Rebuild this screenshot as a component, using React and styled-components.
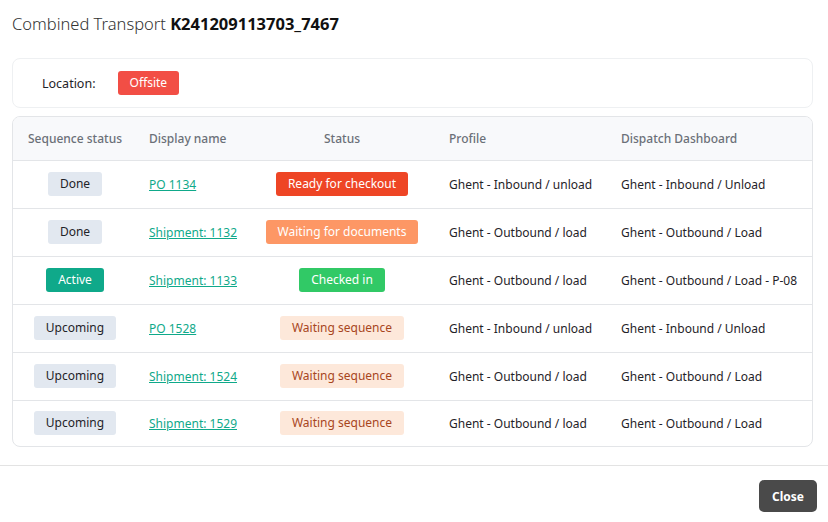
import React from 'react';
import styled, { createGlobalStyle } from 'styled-components';

const GlobalStyle = createGlobalStyle`
  * { box-sizing: border-box; }
  body {
    margin: 0;
    background: #fff;
    font-family: 'Noto Sans', 'Open Sans', sans-serif;
    color: #1f2328;
  }
`;

const rows = [
  { seq: 'done', name: 'PO 1134', status: 'ready', profile: 'Ghent - Inbound / unload', dash: 'Ghent - Inbound / Unload' },
  { seq: 'done', name: 'Shipment: 1132', status: 'docs', profile: 'Ghent - Outbound / load', dash: 'Ghent - Outbound / Load' },
  { seq: 'active', name: 'Shipment: 1133', status: 'checked', profile: 'Ghent - Outbound / load', dash: 'Ghent - Outbound / Load - P-08' },
  { seq: 'upcoming', name: 'PO 1528', status: 'waiting', profile: 'Ghent - Inbound / unload', dash: 'Ghent - Inbound / Unload' },
  { seq: 'upcoming', name: 'Shipment: 1524', status: 'waiting', profile: 'Ghent - Outbound / load', dash: 'Ghent - Outbound / Load' },
  { seq: 'upcoming', name: 'Shipment: 1529', status: 'waiting', profile: 'Ghent - Outbound / load', dash: 'Ghent - Outbound / Load' },
];

const seqLabels = { done: 'Done', active: 'Active', upcoming: 'Upcoming' };
const statusLabels = {
  ready: 'Ready for checkout',
  docs: 'Waiting for documents',
  checked: 'Checked in',
  waiting: 'Waiting sequence',
};

const tones = {
  done: { bg: '#e2e8f0', fg: '#1f2328' },
  upcoming: { bg: '#e2e8f0', fg: '#1f2328' },
  active: { bg: '#0fa98a', fg: '#ffffff' },
  ready: { bg: '#ee4525', fg: '#ffffff' },
  docs: { bg: '#fd9765', fg: '#ffffff' },
  checked: { bg: '#31c966', fg: '#ffffff' },
  waiting: { bg: '#fde8da', fg: '#a8461d' },
  offsite: { bg: '#f24e45', fg: '#ffffff' },
};

export default function App() {
  return (
    <>
      <GlobalStyle />
      <Modal>
        <Title>
          Combined Transport <strong>K241209113703_7467</strong>
        </Title>
        <Body>
          <LocationCard>
            <span>Location:</span>
            <Badge $tone="offsite">Offsite</Badge>
          </LocationCard>
          <TableCard>
            <Table>
              <colgroup>
                <col style={{ width: 124 }} />
                <col style={{ width: 110 }} />
                <col style={{ width: 190 }} />
                <col style={{ width: 172 }} />
                <col />
              </colgroup>
              <thead>
                <tr>
                  <Th $center>Sequence status</Th>
                  <Th>Display name</Th>
                  <Th $center>Status</Th>
                  <Th>Profile</Th>
                  <Th>Dispatch Dashboard</Th>
                </tr>
              </thead>
              <tbody>
                {rows.map((row) => (
                  <tr key={row.name}>
                    <Td $center>
                      <Badge $tone={row.seq}>{seqLabels[row.seq]}</Badge>
                    </Td>
                    <Td>
                      <NameLink href="#">{row.name}</NameLink>
                    </Td>
                    <Td $center>
                      <Badge $tone={row.status}>{statusLabels[row.status]}</Badge>
                    </Td>
                    <Td>{row.profile}</Td>
                    <Td>{row.dash}</Td>
                  </tr>
                ))}
              </tbody>
            </Table>
          </TableCard>
        </Body>
        <Footer>
          <CloseButton type="button">Close</CloseButton>
        </Footer>
      </Modal>
    </>
  );
}

const Modal = styled.div`
  width: 828px;
  height: 522px;
  display: flex;
  flex-direction: column;
  background: #fff;
`;

const Title = styled.h2`
  margin: 0;
  padding: 12px 12px 0;
  height: 50px;
  font-size: 16.5px;
  font-weight: 300;
  color: #333;
  line-height: 24px;

  strong {
    font-weight: 700;
    color: #111;
  }
`;

const Body = styled.div`
  padding: 8px 15px 18px 12px;
  display: flex;
  flex-direction: column;
  gap: 8px;
  border-bottom: 1px solid #e3e3e3;
`;

const LocationCard = styled.div`
  height: 50px;
  border: 1px solid #eef0f2;
  border-radius: 8px;
  display: flex;
  align-items: center;
  gap: 22px;
  padding: 0 29px;
  font-size: 12.5px;
  color: #1f2328;
`;

const TableCard = styled.div`
  border: 1px solid #e3e5e8;
  border-radius: 8px;
  overflow: hidden;
`;

const Table = styled.table`
  width: 100%;
  border-collapse: collapse;
  table-layout: fixed;
  font-size: 12px;
`;

const Th = styled.th`
  height: 43px;
  background: #f8f9fb;
  color: #6b7078;
  font-weight: 500;
  text-align: ${(p) => (p.$center ? 'center' : 'left')};
  padding: 0 12px;
  border-bottom: 1px solid #e3e5e8;
  white-space: nowrap;
`;

const Td = styled.td`
  height: 48px;
  padding: 0 12px;
  text-align: ${(p) => (p.$center ? 'center' : 'left')};
  color: #1f2328;
  white-space: nowrap;
  border-bottom: 1px solid #e3e5e8;

  tr:last-child & {
    border-bottom: none;
    height: 46px;
  }
`;

const Badge = styled.span`
  display: inline-block;
  height: 24px;
  line-height: 24px;
  padding: 0 12px;
  border-radius: 3px;
  font-size: 12px;
  background: ${(p) => tones[p.$tone].bg};
  color: ${(p) => tones[p.$tone].fg};
`;

const NameLink = styled.a`
  color: #0fa98a;
  text-decoration: underline;
`;

const Footer = styled.div`
  display: flex;
  justify-content: flex-end;
  padding: 14px 11px 0;
`;

const CloseButton = styled.button`
  height: 32px;
  padding: 0 13px;
  border: none;
  border-radius: 5px;
  background: #4a4a4a;
  color: #fff;
  font-family: inherit;
  font-size: 12px;
  font-weight: 700;
  cursor: pointer;
`;
